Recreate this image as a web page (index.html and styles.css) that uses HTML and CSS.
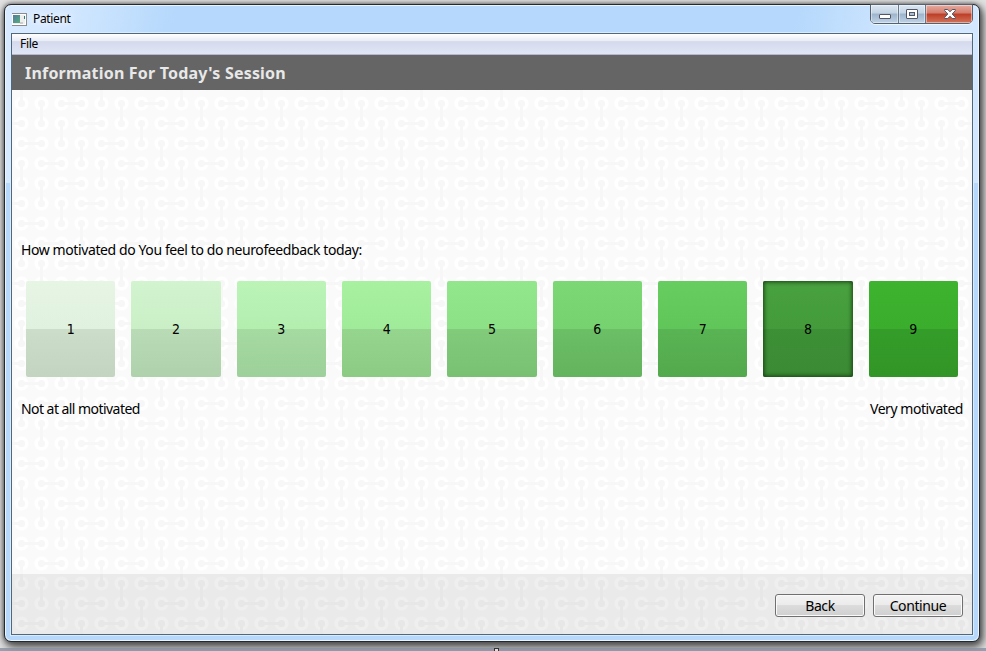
FILE: index.html
```
<!DOCTYPE html>
<html lang="en">
<head>
<meta charset="utf-8">
<title>Patient</title>
<link rel="stylesheet" href="styles.css">
</head>
<body>
<div class="window">
  <header class="titlebar">
    <svg class="app-icon" width="15" height="13" viewBox="0 0 15 13">
      <defs><linearGradient id="app" x2="1" y2="1"><stop stop-color="#5579a0"/><stop offset="1" stop-color="#54ae7c"/></linearGradient></defs>
      <path fill="#8c8c8c" d="M0 0h15v13H0z"/><path fill="#fff" d="M0 1h14v11H0z"/><path fill="#eee" d="M1 2h12v9H1z"/>
      <path fill="url(#app)" d="M1 2h7v8H1z"/><path fill="#278079" d="M12 3h1v3h-1z"/><path fill="#ccc" d="M8 9h3v2H8z"/>
    </svg>
    <span class="caption">Patient</span>
    <div class="controls">
      <span class="control min"><svg width="12" height="6"><rect x=".5" y=".5" width="11" height="4" rx=".5" fill="#fff" stroke="#535666"/></svg></span>
      <span class="control max"><svg width="12" height="10"><rect x=".5" y=".5" width="11" height="9" rx=".5" fill="#fff" stroke="#535666"/><rect x="3.5" y="3.5" width="5" height="3" fill="#a9bfd4" stroke="#535666"/></svg></span>
      <span class="control close"><svg width="12" height="10"><path d="M.7.5h3.1L6 2.8 8.2.5h3.1v1.2L8.2 5l3.1 3.3v1.2H8.2L6 7.2 3.8 9.5H.7V8.3L3.8 5 .7 1.7z" fill="#fff" stroke="#535666"/></svg></span>
    </div>
  </header>
  <div class="client">
    <nav class="menu"><span>File</span></nav>
    <h1>Information For Today's Session</h1>
    <div class="page">
      <svg class="backdrop" width="960" height="544">
        <defs>
          <pattern id="links" x="-1" y="3" width="80" height="80" patternUnits="userSpaceOnUse">
            <g fill="#f7f7f7" stroke="#fff" stroke-width="3.6">
              <circle cx="10.5" cy="10.5" r="5.3"/><circle cx="30.5" cy="10.5" r="5.3"/><circle cx="50.5" cy="10.5" r="5.3"/><circle cx="70.5" cy="10.5" r="5.3"/>
              <circle cx="10.5" cy="30.5" r="5.3"/><circle cx="30.5" cy="30.5" r="5.3"/><circle cx="50.5" cy="30.5" r="5.3"/><circle cx="70.5" cy="30.5" r="5.3"/>
              <circle cx="10.5" cy="50.5" r="5.3"/><circle cx="30.5" cy="50.5" r="5.3"/><circle cx="50.5" cy="50.5" r="5.3"/><circle cx="70.5" cy="50.5" r="5.3"/>
              <circle cx="10.5" cy="70.5" r="5.3"/><circle cx="30.5" cy="70.5" r="5.3"/><circle cx="50.5" cy="70.5" r="5.3"/><circle cx="70.5" cy="70.5" r="5.3"/>
            </g>
            <path d="M10.5 0v10.5M30.5 10.5v20M50.5 10.5h20M0 30.5h10.5M70.5 30.5H80M50.5 30.5v20M10.5 50.5h20M70.5 50.5v20M30.5 70.5h20M10.5 70.5V80" fill="none" stroke="#f7f7f7" stroke-width="3"/>
          </pattern>
        </defs>
        <rect width="960" height="544" fill="url(#links)"/>
      </svg>
      <main>
        <p class="question">How motivated do You feel to do neurofeedback today:</p>
        <div class="scale">
          <button class="s1">1</button><button class="s2">2</button><button class="s3">3</button>
          <button class="s4">4</button><button class="s5">5</button><button class="s6">6</button>
          <button class="s7">7</button><button class="s8">8</button><button class="s9">9</button>
        </div>
        <div class="ends"><span class="low">Not at all motivated</span><span class="high">Very motivated</span></div>
      </main>
      <footer><button>Back</button><button class="next">Continue</button></footer>
    </div>
  </div>
</div>
<div class="desk"><i></i></div>
</body>
</html>
```
FILE: styles.css
```
* { box-sizing: border-box; }
body {
  margin: 0;
  height: 651px;
  padding: 4px 6px 0 4px;
  overflow: hidden;
  position: relative;
  background: #e2e2e2;
  color: #000;
  font: 14px "Noto Sans", "Open Sans", sans-serif;
}
button { font: inherit; color: inherit; padding: 0; border: 0; }
svg { display: block; }

.window {
  width: 976px;
  height: 638px;
  padding: 0 6px 7px;
  border: 1px solid #25282d;
  border-radius: 7px;
  background: linear-gradient(100deg, #d8eaff 0, #d3e8ff 60px, #b5d8fc 170px, #b5d8fc 780px, #d3e8ff 900px, #d3e8ff) 0 0 / 100% 178px no-repeat, #b7d8fb;
  box-shadow: inset 0 0 0 1px #e9f5ff, 0 0 4px 0 #555, 2px 4px 10px 1px #444;
}
.titlebar { height: 28px; display: flex; align-items: flex-start; }
.app-icon { margin: 8px 0 0 1px; }
.caption { margin: 5px auto 0 6px; font-size: 12px; line-height: 17px; letter-spacing: -.35px; text-shadow: 0 0 8px #fff, 0 0 10px #fff; }
.controls {
  height: 20px;
  display: flex;
  margin: -1px 0 0 0;
  border: 1px solid #56616f;
  border-radius: 0 0 5px 5px;
  overflow: hidden;
  box-shadow: 0 1px 0 #ecf7ff;
}
.control {
  display: flex;
  align-items: center;
  justify-content: center;
  width: 28px;
  border-right: 1px solid #66788b;
  background: linear-gradient(#dce7f2, #c3d3e3 45%, #9db4cb 50%, #bfd3e6);
  box-shadow: inset 0 0 0 1px #ffffff70;
}
.min { padding-top: 5px; }
.max { width: 27px; }
.close { width: 46px; padding-left: 1px; border: 0; background: linear-gradient(#e7ab9f, #d27c6c 45%, #bd3d27 50%, #d3745b); }

.client { width: 962px; height: 602px; border: 1px solid #53677c; background: #fafafa; box-shadow: 0 0 0 1px #d8ecff; }
.menu {
  height: 21px;
  padding-left: 8px;
  border-bottom: 1px solid #b5b9cf;
  background: linear-gradient(#fff, #e8ecf6 35%, #d4daec 38%, #e1e6f6);
  font-size: 12px;
  line-height: 20px;
  letter-spacing: -.3px;
}
h1 {
  height: 35px;
  margin: 0;
  padding-left: 13px;
  background: #656565;
  color: #e8e8e8;
  font: bold 16px/37px "Noto Sans", sans-serif;
  letter-spacing: .2px;
}
.page { position: relative; height: 544px; }
.backdrop { position: absolute; inset: 0; }
main { position: relative; height: 484px; padding: 150px 9px 0; }
.question { margin: 0; height: 20px; line-height: 20px; letter-spacing: -.4px; white-space: nowrap; }
.scale { display: grid; grid-template-columns: repeat(9, 1fr); gap: 16px; margin: 21px 5px 0; height: 96px; }
.scale button { border-radius: 2px; font: 14px "DejaVu Sans Condensed", "DejaVu Sans", sans-serif; }
.s1 { background: linear-gradient(#e6f5e4, #e1f1df 50%, #ccdeca 50%, #c3d5c1); }
.s2 { background: linear-gradient(#d2f4cf, #caefc6 50%, #b9dbb5 50%, #afd2ac); }
.s3 { background: linear-gradient(#bcf4b8, #b3eeaf 50%, #a5daa1 50%, #9dd09a); }
.s4 { background: linear-gradient(#a7f1a0, #a0eb99 50%, #95d58e 50%, #8bcb84); }
.s5 { background: linear-gradient(#92e68c, #8ce086 50%, #81cb7b 50%, #79c073); }
.s6 { background: linear-gradient(#7cd775, #76d26f 50%, #6bbf65 50%, #64b35e); }
.s7 { background: linear-gradient(#67cd61, #61c65a 50%, #59b453 50%, #53a94d); }
.s8 { background: linear-gradient(#48a23e, #439b3a 50%, #3d9036 50%, #3b8a34); }
.scale .s8 { box-shadow: inset 0 0 4px 1px #173e13; }
.s9 { background: linear-gradient(#3eb330, #3aae2c 50%, #349d29 50%, #329527); }
.ends { display: flex; justify-content: space-between; margin-top: 22px; line-height: 20px; }
.low { letter-spacing: -.55px; }
.high { letter-spacing: -.45px; }

footer {
  position: relative;
  height: 60px;
  padding: 20px 9px;
  display: flex;
  justify-content: flex-end;
  gap: 8px;
  background: #00000010;
}
footer button {
  width: 90px;
  height: 23px;
  border: 1px solid #707070;
  border-radius: 3px;
  background: linear-gradient(#f3f3f3, #ebebeb 48%, #dcdcdc 50%, #cfcfcf);
  box-shadow: inset 0 0 0 1px #fafafa;
  letter-spacing: -.4px;
  line-height: 20px;
}
.desk { position: absolute; left: 0; right: 0; bottom: 0; height: 3px; background: #8590a3cc; }
.desk i { display: block; width: 5px; height: 3px; margin-left: 494px; border: 1px solid #333; border-bottom: 0; background: #ddd; }
```
